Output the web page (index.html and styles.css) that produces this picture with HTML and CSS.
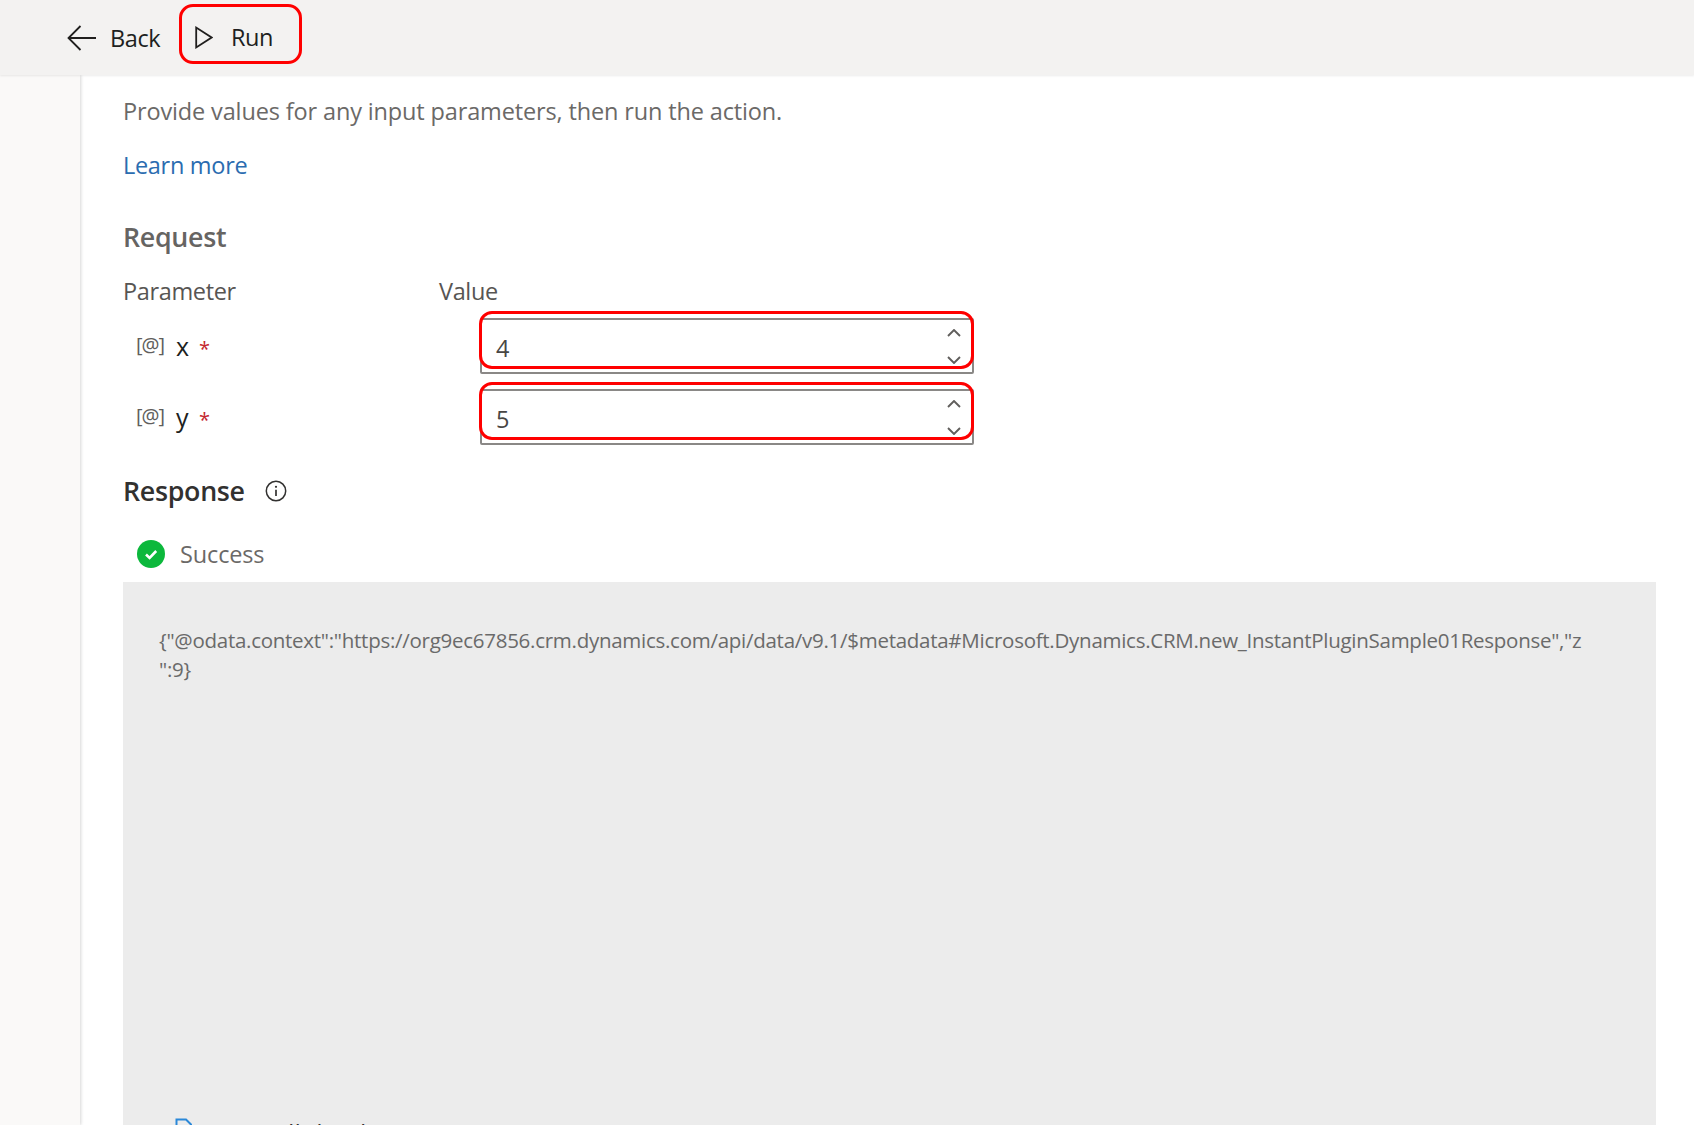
FILE: index.html
```html
<!DOCTYPE html>
<html lang="en">
<head>
<meta charset="utf-8">
<title>Run action</title>
<link rel="stylesheet" href="styles.css">
</head>
<body>
<header class="topbar">
  <button class="cmd cmd-back">
    <svg class="ic-back" viewBox="0 0 30 26" width="30" height="26"><path d="M1.5 13H29M13.5 1 1.5 13l12 12" fill="none" stroke="#201f1e" stroke-width="1.8"/></svg>
    <span>Back</span>
  </button>
  <button class="cmd cmd-run">
    <svg class="ic-run" viewBox="0 0 18 23" width="18" height="23"><path d="M1.2 1.6V21.4L16.6 11.5Z" fill="none" stroke="#201f1e" stroke-width="1.8"/></svg>
    <span>Run</span>
  </button>
</header>
<div class="main">
  <aside class="rail"></aside>
  <main class="content">
    <p class="intro">Provide values for any input parameters, then run the action.</p>
    <a class="learn">Learn more</a>
    <h2 class="h-request">Request</h2>
    <div class="params-head"><span class="col-param">Parameter</span><span class="col-value">Value</span></div>
    <div class="param">
      <div class="param-name"><span class="at">[@]</span><span class="pname">x</span><span class="req">*</span></div>
      <div class="spin">
        <span class="spin-val">4</span>
        <span class="arrows">
          <svg viewBox="0 0 14 8" width="14" height="8"><path d="M1 7l6-6 6 6" fill="none" stroke="#605e5c" stroke-width="1.9"/></svg>
          <svg viewBox="0 0 14 8" width="14" height="8"><path d="M1 1l6 6 6-6" fill="none" stroke="#605e5c" stroke-width="1.9"/></svg>
        </span>
      </div>
    </div>
    <div class="param">
      <div class="param-name"><span class="at">[@]</span><span class="pname">y</span><span class="req">*</span></div>
      <div class="spin">
        <span class="spin-val">5</span>
        <span class="arrows">
          <svg viewBox="0 0 14 8" width="14" height="8"><path d="M1 7l6-6 6 6" fill="none" stroke="#605e5c" stroke-width="1.9"/></svg>
          <svg viewBox="0 0 14 8" width="14" height="8"><path d="M1 1l6 6 6-6" fill="none" stroke="#605e5c" stroke-width="1.9"/></svg>
        </span>
      </div>
    </div>
    <div class="resp-head">
      <h2 class="h-response">Response</h2>
      <svg viewBox="0 0 22 22" width="22" height="22"><circle cx="11" cy="11" r="9.7" fill="none" stroke="#323130" stroke-width="1.5"/><path d="M11 9.8V16" stroke="#323130" stroke-width="1.7"/><circle cx="11" cy="6.8" r="1.1" fill="#323130"/></svg>
    </div>
    <div class="status">
      <svg viewBox="0 0 28 28" width="28" height="28"><circle cx="14" cy="14" r="14" fill="#0cb83c"/><path d="M9 14.5l3.6 3.4L19.2 11" fill="none" stroke="#fff" stroke-width="2.6"/></svg>
      <span>Success</span>
    </div>
    <div class="result">
      <p class="json">{"@odata.context":"https://org9ec67856.crm.dynamics.com/api/data/v9.1/$metadata#Microsoft.Dynamics.CRM.new_InstantPluginSample01Response","z<br>":9}</p>
      <div class="copy">
        <svg viewBox="0 0 18 20" width="18" height="20"><path d="M1.5 1.5H11l5 5V19H1.5Z" fill="none" stroke="#2b88d8" stroke-width="2"/></svg>
        <span>Copy all the data</span>
      </div>
    </div>
  </main>
</div>
</body>
</html>
```
FILE: styles.css
```css
* { box-sizing: border-box; }
html, body { margin: 0; height: 100%; overflow: hidden; }
body { font-family: "Open Sans", "Noto Sans", sans-serif; background: #fff; color: #323130; }
.topbar { height: 75px; background: #f3f2f1; display: flex; align-items: flex-start; padding-left: 60px; box-shadow: 0 1px 2px rgba(0,0,0,.08); position: relative; z-index: 1; }
.cmd { display: flex; align-items: center; border: 0; background: none; font: inherit; font-size: 23.5px; color: #201f1e; padding: 0; letter-spacing: -.4px; }
.cmd-back { margin-top: 13px; height: 50px; width: 119px; padding-left: 7px; gap: 13px; }
.cmd-run { margin-top: 4px; height: 60px; width: 123px; border: 3px solid #f00; border-radius: 14px; padding: 6px 0 0 13px; gap: 18px; }
.main { display: flex; height: 1050px; }
.rail { width: 80px; flex: none; background: #faf9f8; box-shadow: 1px 0 3px rgba(0,0,0,.16); }
.content { flex: 1; padding: 0 38px 0 43px; min-width: 0; }
.intro { margin: 0; padding-top: 20px; font-size: 23.5px; line-height: 32px; color: #6b6967; letter-spacing: -.14px; }
.learn { display: block; margin-top: 22px; font-size: 23.5px; line-height: 32px; color: #2b6cb0; letter-spacing: -.3px; }
.h-request { margin: 38px 0 0; font-size: 26.8px; line-height: 36px; font-weight: 600; color: #666462; letter-spacing: -.3px; }
.params-head { display: flex; margin-top: 20px; font-size: 23.5px; line-height: 32px; color: #575553; letter-spacing: -.35px; }
.col-param { width: 316px; }
.param { display: flex; height: 71px; }
.param-name { width: 357px; padding: 22px 0 0 13px; display: flex; align-items: baseline; }
.at { font-size: 20px; letter-spacing: -1px; color: #605e5c; width: 40px; position: relative; top: -4px; }
.pname { font-size: 25px; font-weight: 500; color: #201f1e; width: 23px; }
.req { font-size: 20px; color: #c4262e; }
.spin { width: 494px; height: 56px; margin-top: 11px; border: 2px solid #8a8886; border-radius: 2px; display: flex; justify-content: space-between; padding: 10px 11px 0 14px; position: relative; }
.spin::after { content: ""; box-sizing: border-box; position: absolute; left: -3px; right: -2px; top: -9px; height: 58px; border: 3.5px solid #f00; border-radius: 13px; }
.spin-val { font-size: 23.5px; line-height: 36px; color: #484644; }
.arrows { display: flex; flex-direction: column; gap: 18.5px; margin-top: -1px; }
.resp-head { display: flex; align-items: center; gap: 20px; margin-top: 21.6px; height: 40px; }
.h-response { margin: 0; font-size: 26.8px; font-weight: 600; color: #323130; letter-spacing: -.3px; }
.status { display: flex; align-items: center; gap: 15px; margin: 27px 0 0 14px; font-size: 23.5px; color: #6b6967; letter-spacing: -.14px; }
.result { margin-top: 12px; height: 600px; background: #ececec; padding: 44px 36px 0; }
.json { margin: 0; font-size: 20.5px; line-height: 29px; color: #6a6a6a; letter-spacing: -.27px; height: 492px; }
.copy { display: flex; gap: 18px; padding-left: 16px; font-size: 23.5px; line-height: 24px; color: #323130; align-items: flex-start; }
.copy span { letter-spacing: .5px; padding-top: 3px; }
```
